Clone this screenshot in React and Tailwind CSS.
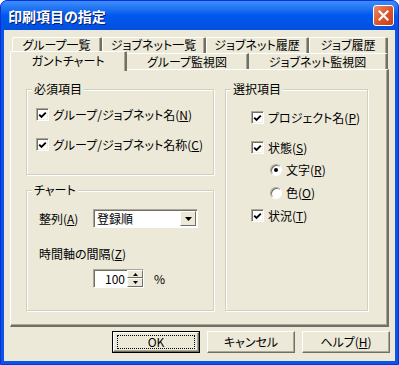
import React from "react";

const Check = () => (
  <span className="w-[13px] h-[13px] shrink-0 bg-white border border-t-[#ACA899] border-l-[#ACA899] border-r-white border-b-white shadow-[inset_1px_1px_0_#716F64,inset_-1px_-1px_0_#F1EFE2] flex items-center justify-center">
    <svg width="9" height="8" viewBox="0 0 9 8">
      <path d="M1.2 3.6l2.3 2.4L7.8 1.6" fill="none" stroke="#000" strokeWidth="1.9" />
    </svg>
  </span>
);

const Radio = ({ on }) => (
  <span className="w-[12px] h-[12px] shrink-0 rounded-full bg-white border border-t-[#ACA899] border-l-[#ACA899] border-r-white border-b-white shadow-[inset_1px_1px_0_#716F64] flex items-center justify-center">
    {on && <span className="w-[4px] h-[4px] rounded-full bg-black" />}
  </span>
);

const Group = ({ label, className, children }) => (
  <div className={"relative border border-[#D0D0BF] shadow-[inset_1px_1px_0_#fff,1px_1px_0_#fff] " + className}>
    <span className="absolute -top-[8px] left-[5px] px-[2px] bg-[#ECE9D8] leading-[14px]">{label}</span>
    {children}
  </div>
);

const Tab = ({ w, children }) => (
  <div className={"h-full flex items-start justify-center pt-[1px] border-t border-l border-white border-r-2 border-r-[#716F64] rounded-t-[2px] bg-[#ECE9D8] shadow-[inset_-1px_0_0_#ACA899] " + w}>
    {children}
  </div>
);

const Btn = ({ def, children }) => (
  <button className={"w-[88px] h-[22px] flex items-center justify-center bg-[#ECE9D8] " + (def ? "border border-black" : "")}>
    <span className="w-full h-full flex items-center justify-center border border-t-white border-l-white border-r-[#716F64] border-b-[#716F64] shadow-[inset_-1px_-1px_0_#ACA899]">
      {def ? (
        <span className="w-[78px] h-[14px] flex items-center justify-center border border-dotted border-black">{children}</span>
      ) : children}
    </span>
  </button>
);

export default function App() {
  return (
    <div className="w-[399px] h-[365px] flex flex-col rounded-t-[7px] overflow-hidden bg-[#0A55E6] border border-[#0831D9] text-[12px] leading-none text-black font-['Noto_Sans_CJK_JP','Liberation_Sans',sans-serif] [font-feature-settings:'palt']">
      {/* title bar */}
      <div className="h-[29px] shrink-0 flex items-center justify-between pl-[7px] pr-[4px] bg-linear-to-b from-[#3D8EF8] via-[#0058EE] to-[#0250DF]">
        <span className="text-white font-bold text-[14px] [text-shadow:1px_1px_0_#0A1E6E]">印刷項目の指定</span>
        <span className="w-[21px] h-[21px] rounded-[3px] border border-white bg-linear-to-br from-[#E98A68] via-[#E0562B] to-[#C23E1A] flex items-center justify-center">
          <svg width="11" height="11" viewBox="0 0 11 11">
            <path d="M1.5 1.5l8 8M9.5 1.5l-8 8" stroke="#fff" strokeWidth="2.2" strokeLinecap="square" />
          </svg>
        </span>
      </div>

      {/* client */}
      <div className="flex-1 mx-[3px] mb-[3px] bg-[#ECE9D8] flex flex-col pl-[6px] pt-[7px]">
        {/* tab rows */}
        <div className="w-[379px] flex flex-col">
          <div className="h-[18px] flex pl-[2px]">
            <Tab w="w-[90px]">グループ一覧</Tab>
            <Tab w="w-[104px]">ジョブネット一覧</Tab>
            <Tab w="w-[103px]">ジョブネット履歴</Tab>
            <Tab w="w-[79px]">ジョブ履歴</Tab>
          </div>
          <div className="h-[16px] flex items-end relative z-10 -mt-[2px]">
            <div className="w-[117px] h-[20px] -mb-[2px] flex items-start justify-center pt-[3px] border-t border-l border-white border-r-2 border-r-[#716F64] rounded-t-[2px] bg-[#ECE9D8] shadow-[inset_-1px_0_0_#ACA899]">
              ガントチャート
            </div>
            <div className="w-[122px] h-[16px] flex items-start justify-center pt-[2px] border-t border-white border-r-2 border-r-[#716F64] bg-[#ECE9D8] shadow-[inset_-1px_0_0_#ACA899]">
              グループ監視図
            </div>
            <div className="w-[139px] h-[16px] flex items-start justify-center pt-[2px] border-t border-white border-r-2 border-r-[#716F64] bg-[#ECE9D8] shadow-[inset_-1px_0_0_#ACA899]">
              ジョブネット監視図
            </div>
          </div>

          {/* panel */}
          <div className="h-[258px] border-t border-l border-white border-r-2 border-b-2 border-r-[#716F64] border-b-[#716F64] shadow-[inset_-1px_-1px_0_#ACA899] flex gap-[11px] pl-[15px] pt-[19px]">
            <div className="w-[188px] flex flex-col gap-[15px]">
              <Group label="必須項目" className="h-[86px] flex flex-col gap-[17px] pl-[9px] pt-[18px]">
                <div className="flex items-center gap-[4px]">
                  <Check />
                  <span>グループ/ジョブネット名(<u>N</u>)</span>
                </div>
                <div className="flex items-center gap-[4px]">
                  <Check />
                  <span>グループ/ジョブネット名称(<u>C</u>)</span>
                </div>
              </Group>
              <Group label="チャート" className="h-[121px] pl-[11px] pt-[18px]">
                <div className="flex items-center">
                  <span className="w-[55px] pl-[1px]">整列(<u>A</u>)</span>
                  <div className="w-[105px] h-[19px] bg-white border border-t-[#ACA899] border-l-[#ACA899] border-r-white border-b-white shadow-[inset_1px_1px_0_#716F64] flex items-center justify-between pl-[3px] pr-[1px]">
                    <span>登録順</span>
                    <span className="w-[16px] h-[15px] bg-[#ECE9D8] border border-t-white border-l-white border-r-[#716F64] border-b-[#716F64] flex items-center justify-center">
                      <svg width="7" height="4" viewBox="0 0 7 4"><path d="M0 0h7L3.5 4z" fill="#000" /></svg>
                    </span>
                  </div>
                </div>
                <div className="mt-[20px] pl-[1px]">時間軸の間隔(<u>Z</u>)</div>
                <div className="mt-[9px] ml-[55px] flex items-center gap-[10px]">
                  <div className="w-[51px] h-[19px] bg-white border border-t-[#ACA899] border-l-[#ACA899] border-r-white border-b-white shadow-[inset_1px_1px_0_#716F64] flex items-center">
                    <span className="flex-1 text-right pr-[2px]">100</span>
                    <span className="w-[16px] h-[17px] flex flex-col">
                      <span className="h-[8px] bg-[#ECE9D8] border border-t-white border-l-white border-r-[#716F64] border-b-[#716F64] flex items-center justify-center">
                        <svg width="5" height="3" viewBox="0 0 5 3"><path d="M0 3h5L2.5 0z" fill="#000" /></svg>
                      </span>
                      <span className="h-[9px] bg-[#ECE9D8] border border-t-white border-l-white border-r-[#716F64] border-b-[#716F64] flex items-center justify-center">
                        <svg width="5" height="3" viewBox="0 0 5 3"><path d="M0 0h5L2.5 3z" fill="#000" /></svg>
                      </span>
                    </span>
                  </div>
                  <span>%</span>
                </div>
              </Group>
            </div>

            <Group label="選択項目" className="w-[143px] h-[222px] flex flex-col pl-[25px] pt-[21px]">
              <div className="flex items-center gap-[4px]">
                <Check />
                <span>プロジェクト名(<u>P</u>)</span>
              </div>
              <div className="mt-[17px] flex items-center gap-[4px]">
                <Check />
                <span>状態(<u>S</u>)</span>
              </div>
              <div className="mt-[10px] ml-[19px] flex items-center gap-[4px]">
                <Radio on />
                <span>文字(<u>R</u>)</span>
              </div>
              <div className="mt-[11px] ml-[19px] flex items-center gap-[4px]">
                <Radio />
                <span>色(<u>O</u>)</span>
              </div>
              <div className="mt-[10px] flex items-center gap-[4px]">
                <Check />
                <span>状況(<u>T</u>)</span>
              </div>
            </Group>
          </div>
        </div>

        {/* buttons */}
        <div className="w-[380px] mt-[4px] flex justify-end gap-[7px]">
          <Btn def>OK</Btn>
          <Btn>キャンセル</Btn>
          <Btn>ヘルプ(<u>H</u>)</Btn>
        </div>
      </div>
    </div>
  );
}
